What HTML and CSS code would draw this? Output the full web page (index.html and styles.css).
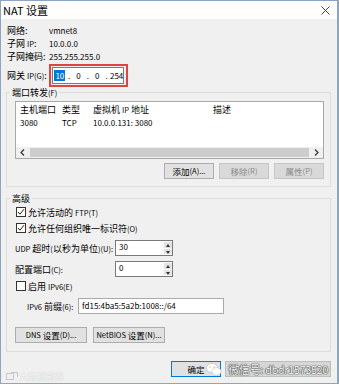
FILE: index.html
```html
<!DOCTYPE html>
<html lang="zh-CN">
<head>
    <meta charset="UTF-8">
    <title>NAT 设置</title>
    <link rel="stylesheet" href="styles.css">
</head>
<body>
    <div class="window">
        <div class="titlebar">
            <span class="title">NAT 设置</span>
            <svg class="close" width="9" height="9" viewBox="0 0 9 9"><path d="M0.5 0.5L8.5 8.5M8.5 0.5L0.5 8.5" stroke="#444" stroke-width="1"/></svg>
        </div>
        <div class="body">
            <div class="info">
                <span>网络:</span><span class="v">vmnet8</span>
                <span>子网 <small>IP</small>:</span><span class="v">10.0.0.0</span>
                <span>子网掩码:</span><span class="v">255.255.255.0</span>
                <span>网关 <small>IP(G)</small>:</span>
                <div class="mark">
                    <div class="ipbox">
                        <span class="f"><span class="sel">10</span></span><span class="dot">.</span>
                        <span class="f">0</span><span class="dot">.</span>
                        <span class="f">0</span><span class="dot">.</span>
                        <span class="f">254</span>
                    </div>
                </div>
            </div>

            <fieldset class="group">
                <legend>端口转发<small>(F)</small></legend>
                <div class="list">
                    <div class="lrow head"><span>主机端口</span><span>类型</span><span>虚拟机 <small>IP</small> 地址</span><span>描述</span></div>
                    <div class="lrow"><span>3080</span><span>TCP</span><span>10.0.0.131: 3080</span><span></span></div>
                    <div class="fill"></div>
                    <div class="hscroll">
                        <span class="arrow"><svg width="5" height="7" viewBox="0 0 5 7"><path d="M4 0.5L1 3.5L4 6.5" fill="none" stroke="#333" stroke-width="1.2"/></svg></span>
                        <span class="thumb"></span>
                        <span class="arrow"><svg width="5" height="7" viewBox="0 0 5 7"><path d="M1 0.5L4 3.5L1 6.5" fill="none" stroke="#333" stroke-width="1.2"/></svg></span>
                    </div>
                </div>
                <div class="btns">
                    <span class="btn">添加<small>(A)...</small></span>
                    <span class="btn off">移除<small>(R)</small></span>
                    <span class="btn off">属性<small>(P)</small></span>
                </div>
            </fieldset>

            <fieldset class="group adv">
                <legend>高级</legend>
                <label class="check first"><span class="box on"><svg width="8" height="8" viewBox="0 0 8 8"><path d="M1 4L3 6.2L7 1.2" fill="none" stroke="#222" stroke-width="1"/></svg></span>允许活动的&nbsp;<small>FTP(T)</small></label>
                <label class="check"><span class="box on"><svg width="8" height="8" viewBox="0 0 8 8"><path d="M1 4L3 6.2L7 1.2" fill="none" stroke="#222" stroke-width="1"/></svg></span>允许任何组织唯一标识符<small>(O)</small></label>
                <div class="field">
                    <span class="lbl"><small>UDP</small> 超时<small>(</small>以秒为单位<small>)(U):</small></span>
                    <span class="spin"><span class="val">30</span><span class="updown"><i class="up"></i><i class="down"></i></span></span>
                </div>
                <div class="field">
                    <span class="lbl">配置端口<small>(C):</small></span>
                    <span class="spin"><span class="val">0</span><span class="updown"><i class="up"></i><i class="down"></i></span></span>
                </div>
                <label class="check v6"><span class="box"></span>启用&nbsp;<small>IPv6(E)</small></label>
                <div class="field prefix">
                    <span class="lbl"><small>IPv6</small> 前缀<small>(6):</small></span>
                    <span class="text">fd15:4ba5:5a2b:1008::/64</span>
                </div>
                <div class="btns left">
                    <span class="btn wide"><small>DNS</small>&nbsp;设置<small>(D)...</small></span>
                    <span class="btn wide"><small>NetBIOS</small>&nbsp;设置<small>(N)...</small></span>
                </div>
            </fieldset>

            <div class="footer">
                <span class="btn ok">确定</span>
                <span class="btn cancel">微信号: dbdr1573520</span>
            </div>
        </div>

        <svg class="wechat" width="16" height="15" viewBox="0 0 16 15">
            <ellipse cx="6" cy="6" rx="5.5" ry="4.6" fill="#fff" stroke="#bbb" stroke-width="0.6"/>
            <ellipse cx="10.5" cy="9.5" rx="4.6" ry="3.8" fill="#fff" stroke="#bbb" stroke-width="0.6"/>
            <circle cx="4" cy="5" r="0.7" fill="#bbb"/><circle cx="8" cy="5" r="0.7" fill="#bbb"/>
        </svg>
        <div class="brand">
            <svg width="12" height="9" viewBox="0 0 12 9"><rect x="0.5" y="1.5" width="7" height="6" fill="none" stroke="#c8c8c8"/><path d="M5 0.5H11.5V5" fill="none" stroke="#c8c8c8"/></svg>
            <span>大数据部落</span>
        </div>
    </div>
</body>
</html>
```

FILE: styles.css
```css
*{
    box-sizing: border-box;
}
body{
    margin: 0;
    background: #fff;
    font-family: "Noto Sans CJK SC", "Liberation Sans", sans-serif;
    font-size: 9px;
    color: #000;
    white-space: nowrap;
}
small{
    font-size: 7.5px;
}
.window{
    position: relative;
    width: 339px;
    height: 384px;
    border: 1px solid #8ea6bd;
    border-right-width: 2px;
    background: #f0f0f0;
}
.titlebar{
    height: 18px;
    background: #fffefc;
    display: flex;
    align-items: center;
    justify-content: space-between;
    padding: 0 7px 0 2px;
}
.title{
    font-size: 11px;
}
.body{
    padding: 5px 6px 0 5px;
}

/* top info */
.info{
    display: grid;
    grid-template-columns: 42px auto;
    grid-template-rows: 13px 13px 13px 24px;
    align-items: center;
    padding-left: 1px;
    line-height: 13px;
}
.v{
    font-size: 8px;
}
.mark{
    align-self: end;
    width: 79px;
    height: 23px;
    border: 2px solid #e0443f;
    padding: 1px 2px 1px 1px;
}
.ipbox{
    height: 17px;
    background: #fff;
    border: 1px solid #7a7a7a;
    display: flex;
    align-items: center;
    font-size: 8px;
    line-height: 11px;
}
.ipbox .f{
    width: 14px;
    text-align: center;
}
.ipbox .f:last-child{
    text-align: left;
    padding-left: 1px;
}
.ipbox .dot{
    width: 5px;
    text-align: center;
}
.sel{
    background: #0078d7;
    color: #fff;
    padding: 0 1px;
}

/* group boxes */
.group{
    margin: -1px 0 0;
    padding: 0 6px 7px 8px;
    border: 1px solid #dcdcdc;
    min-width: 0;
}
.group legend{
    margin-left: -5px;
    padding: 0 2px;
    line-height: 13px;
}
.list{
    margin-top: 2px;
    height: 58px;
    background: #fff;
    border: 1px solid #a8a8a8;
    display: flex;
    flex-direction: column;
}
.lrow{
    display: grid;
    grid-template-columns: 42px 31px 120px auto;
    padding-left: 4px;
    line-height: 12px;
    font-size: 8px;
}
.lrow.head{
    line-height: 15px;
    font-size: 9px;
}
.fill{
    flex: 1;
}
.hscroll{
    height: 11px;
    background: #f0f0f0;
    display: flex;
    align-items: center;
}
.arrow{
    width: 13px;
    display: flex;
    justify-content: center;
}
.thumb{
    flex: 1;
    height: 9px;
    margin: 0 1px;
    background: #cdcdcd;
}
.btns{
    margin-top: 4px;
    display: flex;
    justify-content: flex-end;
    gap: 5px;
}
.btn{
    height: 16px;
    width: 50px;
    background: #e1e1e1;
    border: 1px solid #adadad;
    display: flex;
    align-items: center;
    justify-content: center;
    line-height: 12px;
    font-size: 8.5px;
}
.btn.off{
    background: #d9d9d9;
    border-color: #c6c6c6;
    color: #8a8a8a;
}

/* advanced */
.adv{
    margin-top: 5px;
    padding-bottom: 8px;
}
.check{
    display: flex;
    align-items: center;
    height: 14px;
    margin-top: 2px;
    padding-left: 1px;
}
.check.first{
    margin-top: 0;
}
.box{
    width: 10px;
    height: 10px;
    border: 1px solid #333;
    background: #fff;
    margin-right: 2px;
    display: flex;
    align-items: center;
    justify-content: center;
}
.field{
    display: flex;
    align-items: center;
    height: 16px;
    margin-top: 5px;
}
.field .lbl{
    width: 100px;
}
.spin{
    width: 58px;
    height: 16px;
    background: #fff;
    border: 1px solid #7a7a7a;
    display: flex;
    justify-content: space-between;
    font-size: 8px;
    line-height: 12px;
    padding-left: 3px;
}
.updown{
    width: 8px;
    display: flex;
    flex-direction: column;
    gap: 1px;
    padding: 1px 0;
}
.updown i{
    flex: 1;
    background: #e3e3e3;
    position: relative;
}
.updown i::after{
    content: "";
    position: absolute;
    left: 2px;
    border-left: 2px solid transparent;
    border-right: 2px solid transparent;
}
.updown .up::after{
    top: 2px;
    border-bottom: 3px solid #333;
}
.updown .down::after{
    top: 2px;
    border-top: 3px solid #333;
}
.prefix .lbl{
    width: 63px;
    padding-left: 12px;
}
.prefix .text{
    width: 146px;
    height: 16px;
    background: #fff;
    border: 1px solid #aaa;
    padding-left: 3px;
    font-size: 8px;
    line-height: 13px;
    overflow: hidden;
}
.btns.left{
    margin-top: 13px;
    justify-content: flex-start;
    gap: 6px;
}
.btn.wide{
    width: 72px;
}

/* bottom */
.footer{
    margin-top: 9px;
    display: flex;
    justify-content: flex-end;
    gap: 4px;
}
.btn.ok{
    width: 50px;
    border-color: #0078d7;
}
.btn.cancel{
    width: 106px;
    background: #d6d6d6;
    border-color: #bdbdbd;
    color: #fff;
    font-size: 11px;
    letter-spacing: -0.4px;
    justify-content: flex-end;
    padding-right: 2px;
    text-shadow: 0 0 1px #333, 0 0 1px #333, 0 0 1px #333;
}
.wechat{
    position: absolute;
    left: 205px;
    top: 361px;
}
.brand{
    position: absolute;
    left: 5px;
    top: 369px;
    display: flex;
    align-items: center;
    gap: 1px;
    color: #f6f6f6;
    font-size: 9px;
    text-shadow: 0 0 1px #bbb;
}
```
